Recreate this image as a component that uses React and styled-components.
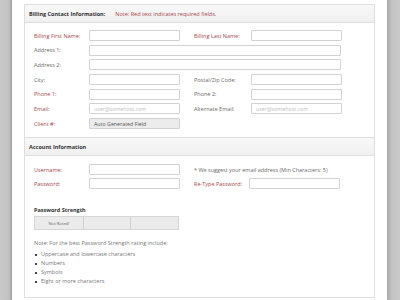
import React from "react";
import styled, { createGlobalStyle } from "styled-components";

const GlobalStyle = createGlobalStyle`
  html, body {
    margin: 0;
    padding: 0;
    background: #fff;
  }
  body {
    font-family: "Open Sans", "Liberation Sans", sans-serif;
    color: #666;
  }
`;

const Page = styled.div`
  width: 400px;
  height: 300px;
  display: flex;
  overflow: hidden;
`;

const Rail = styled.div`
  width: ${(p) => p.$w}px;
  flex-shrink: 0;
  background: ${(p) => p.$bg};
`;

const Main = styled.div`
  flex: 1;
  background: #fff;
  padding: 4px 12px 0 12px;
`;

const Panel = styled.div`
  border: 1px solid #dedede;
  border-bottom: none;
`;

const SectionHead = styled.div`
  height: 17px;
  display: flex;
  align-items: center;
  gap: 10px;
  padding-left: 4px;
  background: linear-gradient(#f8f8f8, #f0f0f0);
  border-bottom: 1px solid #dedede;
  border-top: ${(p) => (p.$top ? "1px solid #dedede" : "none")};
  font-size: 5.5px;
`;

const HeadTitle = styled.span`
  font-weight: 700;
  color: #333;
`;

const Note = styled.span`
  color: #a8484e;
`;

const Body = styled.div`
  padding: ${(p) => p.$pad || "7px 0 8px 9px"};
  display: flex;
  flex-direction: column;
  gap: ${(p) => p.$gap || "3.7px"};
`;

const Row = styled.div`
  display: flex;
  align-items: center;
  height: 11px;
`;

const Label = styled.label`
  width: ${(p) => p.$w || 55}px;
  flex-shrink: 0;
  font-size: 5.5px;
  color: ${(p) => (p.$req ? "#a8484e" : "#6b6b6b")};
`;

const Input = styled.div`
  box-sizing: border-box;
  width: ${(p) => p.$w || 91}px;
  height: 11px;
  flex-shrink: 0;
  border: 1px solid #d2d2d2;
  border-radius: 1px;
  background: ${(p) => (p.$disabled ? "#ececec" : "#fff")};
  font-size: 5.3px;
  color: ${(p) => (p.$disabled ? "#555" : "#bdbdbd")};
  display: flex;
  align-items: center;
  padding-left: 4px;
  margin-right: ${(p) => p.$mr || 0}px;
`;

const Hint = styled.span`
  font-size: 5.5px;
  color: #6b6b6b;
`;

const StrengthTitle = styled.div`
  margin-top: 17px;
  font-size: 5.5px;
  font-weight: 700;
  color: #333;
`;

const StrengthBar = styled.div`
  margin-top: 2px;
  width: 145px;
  height: 14px;
  display: grid;
  grid-template-columns: 1fr 1fr 1fr;
  border: 1px solid #d6d6d6;
  box-sizing: border-box;
  background: #ebebeb;
`;

const Cell = styled.div`
  border-left: ${(p) => (p.$first ? "none" : "1px solid #d0d0d0")};
  display: flex;
  align-items: center;
  justify-content: center;
  font-size: 4.2px;
  color: #666;
`;

const Tip = styled.div`
  margin-top: 9px;
  font-size: 5.5px;
  color: #777;
`;

const Bullets = styled.ul`
  margin: 3px 0 0 0;
  padding: 0 0 0 7px;
  font-size: 5.5px;
  color: #777;
  line-height: 9px;
  list-style: none;

  li {
    position: relative;
  }
  li::before {
    content: "";
    position: absolute;
    left: -6px;
    top: 4px;
    width: 1.6px;
    height: 1.6px;
    background: #444;
  }
`;

const BottomRule = styled.div`
  margin-top: 11px;
  margin-left: -9px;
  border-top: 1px solid #dedede;
`;

export default function App() {
  return (
    <>
      <GlobalStyle />
      <Page>
        <Rail
          $w={12}
          $bg="linear-gradient(90deg, #c9c9c9 0%, #c2c2c2 75%, #9c9c9c 100%)"
        />
        <Main>
          <Panel>
            <SectionHead>
              <HeadTitle>Billing Contact Information:</HeadTitle>
              <Note>Note: Red text indicates required fields.</Note>
            </SectionHead>
            <Body>
              <Row>
                <Label $req>Billing First Name:</Label>
                <Input $mr={14} />
                <Label $req $w={57}>Billing Last Name:</Label>
                <Input />
              </Row>
              <Row>
                <Label>Address 1:</Label>
                <Input $w={252} />
              </Row>
              <Row>
                <Label>Address 2:</Label>
                <Input $w={252} />
              </Row>
              <Row>
                <Label>City:</Label>
                <Input $mr={14} />
                <Label $w={57}>Postal/Zip Code:</Label>
                <Input />
              </Row>
              <Row>
                <Label $req>Phone 1:</Label>
                <Input $mr={14} />
                <Label $w={57}>Phone 2:</Label>
                <Input />
              </Row>
              <Row>
                <Label $req>Email:</Label>
                <Input $mr={14}>user@somehost.com</Input>
                <Label $w={57}>Alternate Email:</Label>
                <Input>user@somehost.com</Input>
              </Row>
              <Row>
                <Label $req>Client #:</Label>
                <Input $disabled>Auto Generated Field</Input>
              </Row>
            </Body>
            <SectionHead $top>
              <HeadTitle>Account Information</HeadTitle>
            </SectionHead>
            <Body $pad="8px 0 0 9px" $gap="3px">
              <Row>
                <Label $req>Username:</Label>
                <Input $mr={14} />
                <Hint>* We suggest your email address (Min Characters: 5)</Hint>
              </Row>
              <Row>
                <Label $req>Password:</Label>
                <Input $mr={14} />
                <Label $req $w={55}>Re-Type Password:</Label>
                <Input />
              </Row>
            </Body>
            <Body $pad="0 0 0 9px" $gap="0">
              <StrengthTitle>Password Strength</StrengthTitle>
              <StrengthBar>
                <Cell $first>Not Rated!</Cell>
                <Cell />
                <Cell />
              </StrengthBar>
              <Tip>Note: For the best Password Strength rating include:</Tip>
              <Bullets>
                <li>Uppercase and lowercase characters</li>
                <li>Numbers</li>
                <li>Symbols</li>
                <li>Eight or more characters</li>
              </Bullets>
              <BottomRule />
            </Body>
          </Panel>
        </Main>
        <Rail
          $w={13}
          $bg="linear-gradient(90deg, #a9a9a9 0%, #c4c4c4 40%, #cacaca 100%)"
        />
      </Page>
    </>
  );
}
